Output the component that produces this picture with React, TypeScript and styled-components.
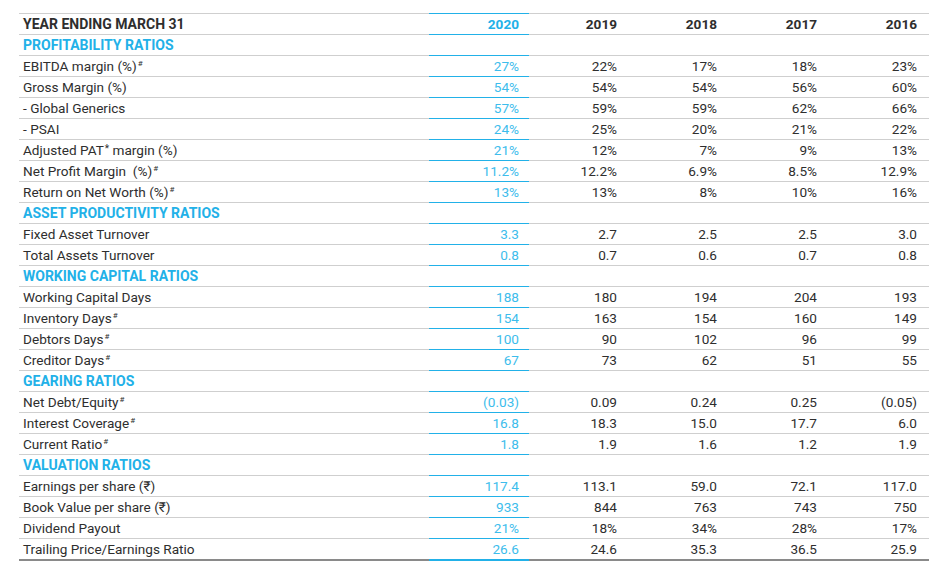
import React from "react";
import styled, { createGlobalStyle } from "styled-components";

const GlobalStyle = createGlobalStyle`
  body {
    margin: 0;
    background: #ffffff;
    font-family: Roboto, "Liberation Sans", sans-serif;
  }
`;

const BLUE = "#22b1e8";
const VALUE_BLUE = "#3dbdec";
const TEXT = "#2e2e2e";
const RULE = "#cfcfcf";

const Page = styled.div`
  padding-top: 13px;
  padding-left: 19px;
`;

const Table = styled.table`
  width: 910px;
  border-collapse: separate;
  border-spacing: 0;
  table-layout: fixed;
  font-size: 13.6px;
  color: ${TEXT};
`;

const Cell = styled.td<{ $current?: boolean; $head?: boolean; $last?: boolean }>`
  height: ${(p) => (p.$head || p.$last ? "19px" : "20px")};
  padding: 0 12px 0 0;
  text-align: right;
  line-height: 20px;
  white-space: nowrap;
  font-weight: ${(p) => (p.$head ? 700 : 400)};
  color: ${(p) => (p.$current ? (p.$head ? BLUE : VALUE_BLUE) : TEXT)};
  border-bottom: ${(p) => (p.$last ? "2px" : "1px")} solid
    ${(p) => (p.$current ? BLUE : p.$last ? "#8a8a8a" : RULE)};
  border-top: ${(p) => (p.$head ? `1px solid ${p.$current ? BLUE : RULE}` : "none")};
  ${(p) => (p.$current ? "padding-right: 10px;" : "")}
`;

const LabelCell = styled(Cell)<{ $section?: boolean }>`
  text-align: left;
  padding: 0 0 0 4px;
  font-weight: ${(p) => (p.$head || p.$section ? 700 : 400)};
  font-size: ${(p) => (p.$head || p.$section ? "14px" : "13.6px")};
  color: ${(p) => (p.$section ? BLUE : TEXT)};
`;

const Sup = styled.sup<{ $star?: boolean }>`
  font-size: ${(p) => (p.$star ? "10px" : "8px")};
  line-height: 0;
  vertical-align: ${(p) => (p.$star ? "3px" : "5px")};
  margin-left: 1px;
`;

type Row =
  | { section: string }
  | { label: React.ReactNode; values: string[] };

const years = ["2020", "2019", "2018", "2017", "2016"];

const hash = <Sup>#</Sup>;

const rows: Row[] = [
  { section: "PROFITABILITY RATIOS" },
  { label: <>EBITDA margin (%){hash}</>, values: ["27%", "22%", "17%", "18%", "23%"] },
  { label: "Gross Margin (%)", values: ["54%", "54%", "54%", "56%", "60%"] },
  { label: "- Global Generics", values: ["57%", "59%", "59%", "62%", "66%"] },
  { label: "- PSAI", values: ["24%", "25%", "20%", "21%", "22%"] },
  { label: <>Adjusted PAT<Sup $star>*</Sup> margin (%)</>, values: ["21%", "12%", "7%", "9%", "13%"] },
  { label: <>Net Profit Margin&nbsp; (%){hash}</>, values: ["11.2%", "12.2%", "6.9%", "8.5%", "12.9%"] },
  { label: <>Return on Net Worth (%){hash}</>, values: ["13%", "13%", "8%", "10%", "16%"] },
  { section: "ASSET PRODUCTIVITY RATIOS" },
  { label: "Fixed Asset Turnover", values: ["3.3", "2.7", "2.5", "2.5", "3.0"] },
  { label: "Total Assets Turnover", values: ["0.8", "0.7", "0.6", "0.7", "0.8"] },
  { section: "WORKING CAPITAL RATIOS" },
  { label: "Working Capital Days", values: ["188", "180", "194", "204", "193"] },
  { label: <>Inventory Days{hash}</>, values: ["154", "163", "154", "160", "149"] },
  { label: <>Debtors Days{hash}</>, values: ["100", "90", "102", "96", "99"] },
  { label: <>Creditor Days{hash}</>, values: ["67", "73", "62", "51", "55"] },
  { section: "GEARING RATIOS" },
  { label: <>Net Debt/Equity{hash}</>, values: ["(0.03)", "0.09", "0.24", "0.25", "(0.05)"] },
  { label: <>Interest Coverage{hash}</>, values: ["16.8", "18.3", "15.0", "17.7", "6.0"] },
  { label: <>Current Ratio{hash}</>, values: ["1.8", "1.9", "1.6", "1.2", "1.9"] },
  { section: "VALUATION RATIOS" },
  { label: "Earnings per share (₹)", values: ["117.4", "113.1", "59.0", "72.1", "117.0"] },
  { label: "Book Value per share (₹)", values: ["933", "844", "763", "743", "750"] },
  { label: "Dividend Payout", values: ["21%", "18%", "34%", "28%", "17%"] },
  { label: "Trailing Price/Earnings Ratio", values: ["26.6", "24.6", "35.3", "36.5", "25.9"] },
];

function App() {
  return (
    <Page>
      <GlobalStyle />
      <Table>
        <colgroup>
          <col style={{ width: 410 }} />
          {years.map((y) => (
            <col key={y} style={{ width: 100 }} />
          ))}
        </colgroup>
        <thead>
          <tr>
            <LabelCell as="th" $head>
              YEAR ENDING MARCH 31
            </LabelCell>
            {years.map((y, i) => (
              <Cell as="th" key={y} $head $current={i === 0}>
                {y}
              </Cell>
            ))}
          </tr>
        </thead>
        <tbody>
          {rows.map((row, r) => {
            const last = r === rows.length - 1;
            if ("section" in row) {
              return (
                <tr key={r}>
                  <LabelCell $section>{row.section}</LabelCell>
                  {years.map((y, i) => (
                    <Cell key={y} $current={i === 0} />
                  ))}
                </tr>
              );
            }
            return (
              <tr key={r}>
                <LabelCell $last={last}>{row.label}</LabelCell>
                {row.values.map((v, i) => (
                  <Cell key={i} $current={i === 0} $last={last}>
                    {v}
                  </Cell>
                ))}
              </tr>
            );
          })}
        </tbody>
      </Table>
    </Page>
  );
}

export default App;
